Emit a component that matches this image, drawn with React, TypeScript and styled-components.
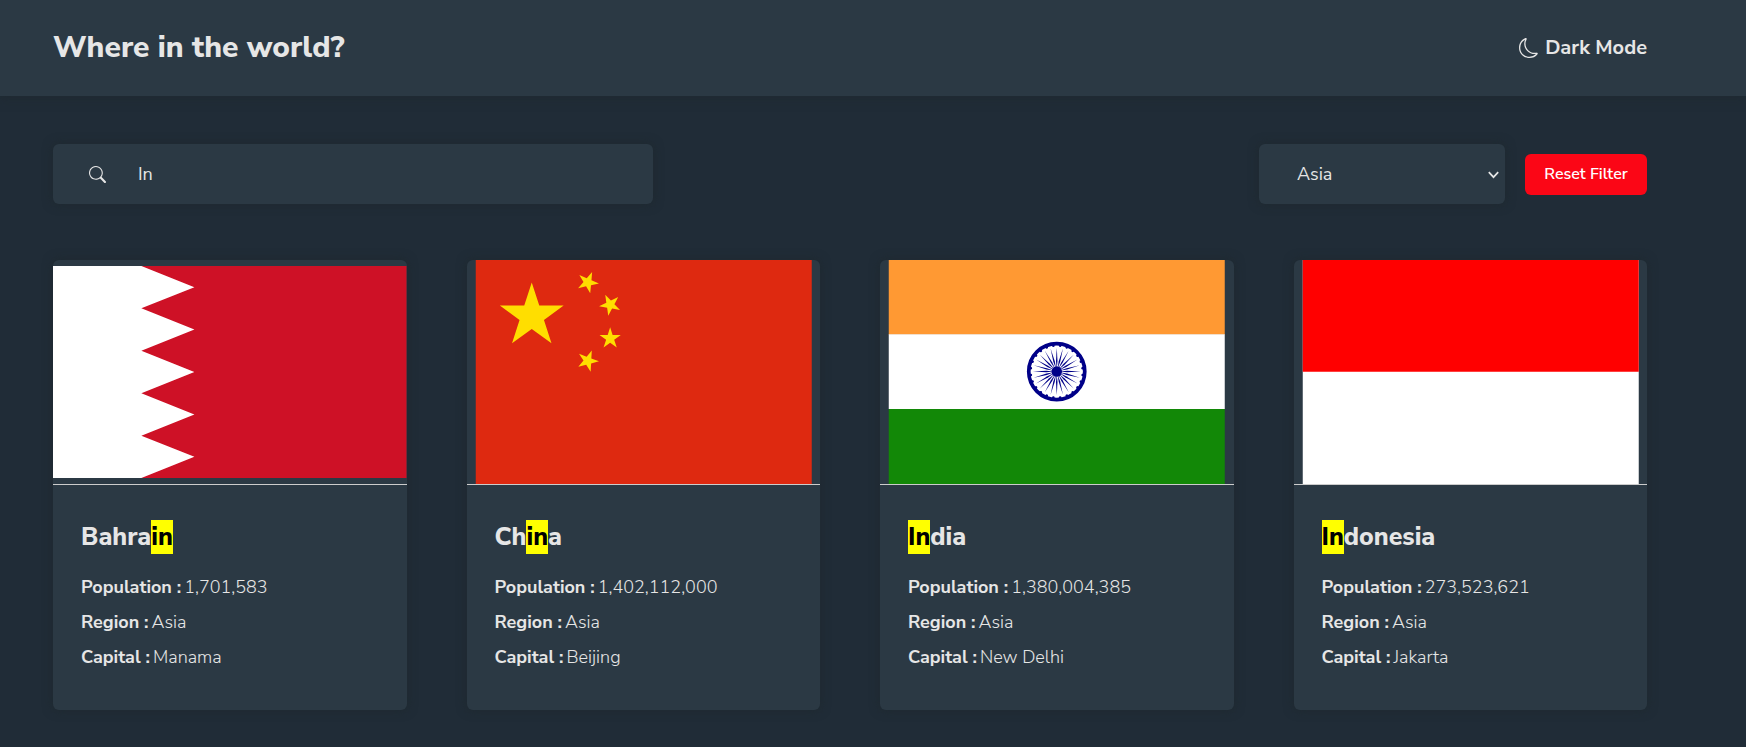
import React, { useState } from "react";
import styled, { createGlobalStyle } from "styled-components";
import { BsMoon, BsSearch } from "react-icons/bs";

const fontStack = `"Nunito Sans", Nunito, Lato, "Open Sans", sans-serif`;
const shadow = "0 0 10px 1px rgba(30, 40, 46, 0.8)";

const GlobalStyle = createGlobalStyle`
  *, *::before, *::after { box-sizing: border-box; }
  body {
    margin: 0;
    background: #202c37;
    color: #e6e6e6;
    font-family: ${fontStack};
  }
`;

const Header = styled.header`
  display: flex;
  align-items: center;
  justify-content: space-between;
  height: 96px;
  padding: 0 99px 1px 53px;
  background: #2b3944;
  box-shadow: ${shadow};
`;

const Title = styled.h1`
  margin: 0;
  font-size: 30px;
  line-height: 41px;
  font-weight: 800;
`;

const ThemeButton = styled.button`
  display: flex;
  align-items: center;
  gap: 6px;
  padding: 0;
  border: 0;
  background: none;
  color: inherit;
  font: 700 20px/28px ${fontStack};
  cursor: pointer;
`;

const Main = styled.main`
  padding: 48px 99px 36px 53px;
`;

const Toolbar = styled.form`
  display: flex;
  align-items: center;
  justify-content: space-between;
  margin-bottom: 56px;
`;

const SearchBox = styled.label`
  display: flex;
  align-items: center;
  gap: 32px;
  flex: 0 1 600px;
  height: 60px;
  padding: 0 36px;
  border-radius: 6px;
  background: #2b3944;
  box-shadow: ${shadow};
`;

const SearchInput = styled.input`
  flex: 1;
  min-width: 0;
  padding: 0;
  border: 0;
  outline: 0;
  background: none;
  color: inherit;
  font: 400 18px/26px ${fontStack};
`;

const Filters = styled.div`
  display: flex;
  align-items: center;
  gap: 20px;
`;

const SelectBox = styled.div`
  position: relative;
  width: 246px;
`;

const RegionSelect = styled.select`
  appearance: none;
  display: block;
  width: 100%;
  height: 60px;
  padding: 0 38px;
  border: 0;
  border-radius: 6px;
  background: #2b3944;
  box-shadow: ${shadow};
  color: inherit;
  font: 400 18px/26px ${fontStack};
`;

const Chevron = styled.svg`
  position: absolute;
  top: 27px;
  right: 6px;
  pointer-events: none;
`;

const ResetButton = styled.button`
  width: 122px;
  height: 41px;
  padding: 0;
  border: 0;
  border-radius: 6px;
  background: #fb0616;
  color: #fff;
  font: 600 16px/24px ${fontStack};
  cursor: pointer;
`;

const Grid = styled.section`
  display: grid;
  grid-template-columns: repeat(4, 1fr);
  gap: 60px;
`;

const Card = styled.article`
  overflow: hidden;
  border-radius: 6px;
  background: #2b3944;
  box-shadow: ${shadow};
`;

const Flag = styled.svg`
  display: block;
  width: 100%;
  height: 225px;
  border-bottom: 1px solid #ccc;
`;

const Details = styled.div`
  padding: 35px 28px;
`;

const Name = styled.h2`
  margin: 0 0 16px;
  font-size: 25px;
  line-height: 34px;
  font-weight: 800;
`;

const Mark = styled.mark`
  background: #ff0;
  color: #000;
`;

const Facts = styled.dl`
  margin: 0;
  font-size: 18px;
  line-height: 35px;
`;

const Fact = styled.div`
  display: flex;
  gap: 3px;
`;

const Term = styled.dt`
  font-weight: 700;
`;

const Value = styled.dd`
  margin: 0;
  font-weight: 300;
`;

const starPoints = (cx: number, cy: number, r: number, turn: number) =>
  Array.from({ length: 10 }, (_, i) => {
    const a = ((turn - 90 + i * 36) * Math.PI) / 180;
    const d = i % 2 ? r * 0.382 : r;
    return `${(cx + d * Math.cos(a)).toFixed(2)},${(cy + d * Math.sin(a)).toFixed(2)}`;
  }).join(" ");

const BahrainFlag = () => (
  <Flag viewBox="0 0 500 300" role="img" aria-label="Flag of Bahrain">
    <path fill="#ce1126" d="M0 0h500v300H0z" />
    <path fill="#fff" d="M0 0h125l75 30-75 30 75 30-75 30 75 30-75 30 75 30-75 30 75 30-75 30H0z" />
  </Flag>
);

const ChinaFlag = () => (
  <Flag viewBox="0 0 30 20" role="img" aria-label="Flag of China">
    <path fill="#de2910" d="M0 0h30v20H0z" />
    <g fill="#ffde00">
      <polygon points={starPoints(5, 5, 3, 0)} />
      <polygon points={starPoints(10, 2, 1, 23)} />
      <polygon points={starPoints(12, 4, 1, 46)} />
      <polygon points={starPoints(12, 7, 1, 0)} />
      <polygon points={starPoints(10, 9, 1, 21)} />
    </g>
  </Flag>
);

const IndiaFlag = () => (
  <Flag viewBox="0 0 225 150" role="img" aria-label="Flag of India">
    <path fill="#f93" d="M0 0h225v50H0z" />
    <path fill="#fff" d="M0 49.700h225v50H0z" />
    <path fill="#128807" d="M0 99.700h225V150H0z" />
    <g transform="translate(112.500 74.700)" fill="#008">
      <circle r="18.750" fill="none" stroke="#008" strokeWidth="2.500" />
      <circle r="3.500" />
      {Array.from({ length: 24 }, (_, i) => (
        <g key={i} transform={`rotate(${i * 15})`}>
          <path d="M0 16 .5 7 0 2-.5 7z" />
          <circle r=".875" cx="2.284" cy="17.351" />
        </g>
      ))}
    </g>
  </Flag>
);

const IndonesiaFlag = () => (
  <Flag viewBox="0 0 450 300" role="img" aria-label="Flag of Indonesia">
    <path fill="#fff" d="M0 0h450v300H0z" />
    <path fill="red" d="M0 0h450v149.500H0z" />
  </Flag>
);

const countries = [
  { name: "Bahrain", population: "1,701,583", region: "Asia", capital: "Manama", Flag: BahrainFlag },
  { name: "China", population: "1,402,112,000", region: "Asia", capital: "Beijing", Flag: ChinaFlag },
  { name: "India", population: "1,380,004,385", region: "Asia", capital: "New Delhi", Flag: IndiaFlag },
  { name: "Indonesia", population: "273,523,621", region: "Asia", capital: "Jakarta", Flag: IndonesiaFlag },
];

const Highlighted = ({ text, query }: { text: string; query: string }) => {
  const at = query ? text.toLowerCase().indexOf(query.toLowerCase()) : -1;
  if (at < 0) return <>{text}</>;
  return (
    <>
      {text.slice(0, at)}
      <Mark>{text.slice(at, at + query.length)}</Mark>
      {text.slice(at + query.length)}
    </>
  );
};

export default function App() {
  const [query, setQuery] = useState("In");
  const [region, setRegion] = useState("Asia");
  const shown = countries.filter(
    (c) => c.name.toLowerCase().includes(query.toLowerCase()) && c.region === region
  );

  return (
    <>
      <GlobalStyle />
      <Header>
        <Title>Where in the world?</Title>
        <ThemeButton type="button">
          <BsMoon size={20} aria-hidden />
          Dark Mode
        </ThemeButton>
      </Header>
      <Main>
        <Toolbar onSubmit={(e) => e.preventDefault()}>
          <SearchBox>
            <BsSearch size={17} aria-hidden />
            <SearchInput aria-label="Search for a country" value={query} onChange={(e) => setQuery(e.target.value)} />
          </SearchBox>
          <Filters>
            <SelectBox>
              <RegionSelect aria-label="Filter by region" value={region} onChange={(e) => setRegion(e.target.value)}>
                <option>Africa</option>
                <option>Americas</option>
                <option>Asia</option>
                <option>Europe</option>
                <option>Oceania</option>
              </RegionSelect>
              <Chevron width="11" height="8" viewBox="0 0 11 8" fill="none" stroke="currentColor" strokeWidth="1.700" aria-hidden>
                <path d="m.800 1.200 4.700 5 4.700-5" />
              </Chevron>
            </SelectBox>
            <ResetButton
              type="button"
              onClick={() => {
                setQuery("");
                setRegion("Asia");
              }}
            >
              Reset Filter
            </ResetButton>
          </Filters>
        </Toolbar>
        <Grid>
          {shown.map((c) => (
            <Card key={c.name}>
              <c.Flag />
              <Details>
                <Name>
                  <Highlighted text={c.name} query={query} />
                </Name>
                <Facts>
                  <Fact>
                    <Term>Population :</Term>
                    <Value>{c.population}</Value>
                  </Fact>
                  <Fact>
                    <Term>Region :</Term>
                    <Value>{c.region}</Value>
                  </Fact>
                  <Fact>
                    <Term>Capital :</Term>
                    <Value>{c.capital}</Value>
                  </Fact>
                </Facts>
              </Details>
            </Card>
          ))}
        </Grid>
      </Main>
    </>
  );
}
